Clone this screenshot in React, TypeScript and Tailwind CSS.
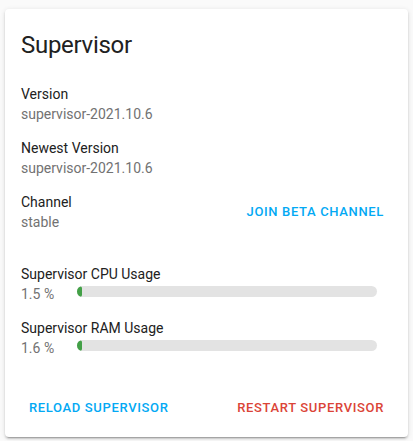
import React from 'react'

const rows = [
  { label: 'Version', value: 'supervisor-2021.10.6' },
  { label: 'Newest Version', value: 'supervisor-2021.10.6' },
]

const usage = [
  { label: 'Supervisor CPU Usage', value: 1.5 },
  { label: 'Supervisor RAM Usage', value: 1.6 },
]

function UsageBar({ label, value }: { label: string; value: number }) {
  return (
    <div>
      <div className="text-[14px] leading-5 text-[#212121]">{label}</div>
      <div className="flex items-start h-5">
        <span className="w-[56px] text-[14px] leading-5 text-[#727272]">{value} %</span>
        <div className="mt-[2px] w-[300px] h-[11px] rounded-full bg-[#e3e3e3] overflow-hidden">
          <div className="h-full rounded-full bg-[#43a047]" style={{ width: `${Math.max(value, 1.7)}%` }} />
        </div>
      </div>
    </div>
  )
}

export default function App() {
  const btn = 'h-9 whitespace-nowrap text-[13px] font-medium uppercase tracking-[0.05em] leading-9'

  return (
    <div className="min-h-screen bg-[#fafafa] pt-[9px] px-[5px] font-['Roboto',sans-serif]">
      <div className="w-[403px] bg-white rounded-[4px] shadow-[0_2px_2px_0_rgba(0,0,0,0.14),0_1px_5px_0_rgba(0,0,0,0.12),0_3px_1px_-2px_rgba(0,0,0,0.2)]">
        <div className="px-4 pt-3 pb-2 text-[24px] leading-[48px] tracking-[-0.012em] text-[#212121]">
          Supervisor
        </div>

        <div className="px-4">
          {rows.map((r) => (
            <div key={r.label} className="py-[7px]">
              <div className="text-[14px] leading-5 text-[#212121]">{r.label}</div>
              <div className="text-[14px] leading-5 text-[#727272]">{r.value}</div>
            </div>
          ))}
          <div className="py-[7px] flex items-center justify-between">
            <div>
              <div className="text-[14px] leading-5 text-[#212121]">Channel</div>
              <div className="text-[14px] leading-5 text-[#727272]">stable</div>
            </div>
            <button className={`${btn} px-2 text-[#03a9f4]`}>Join beta channel</button>
          </div>

          <div className="mt-[25px] space-y-[14px]">
            {usage.map((u) => (
              <UsageBar key={u.label} label={u.label} value={u.value} />
            ))}
          </div>
        </div>

        <div className="mt-8 px-2 pb-[11px] flex justify-between">
          <button className={`${btn} px-4 text-[#03a9f4]`}>Reload supervisor</button>
          <button className={`${btn} px-4 text-[#db4437]`}>Restart supervisor</button>
        </div>
      </div>
    </div>
  )
}
